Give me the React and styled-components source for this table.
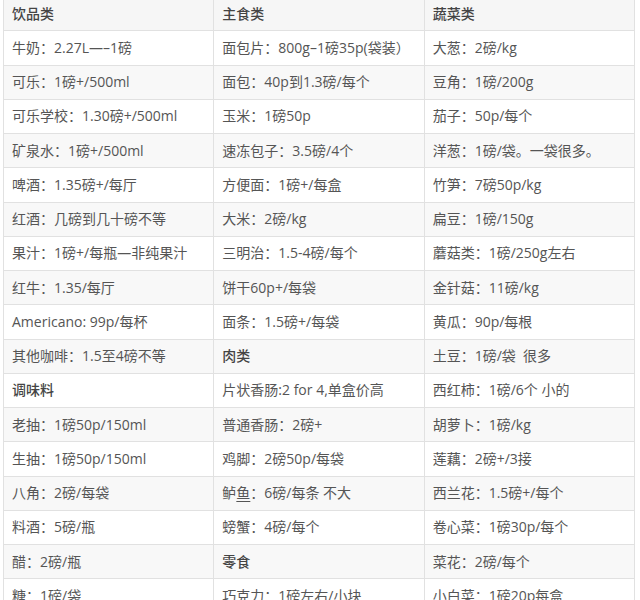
import React from 'react';
import styled, { createGlobalStyle } from 'styled-components';

const GlobalStyle = createGlobalStyle`
  html, body {
    margin: 0;
    padding: 0;
    background: #ffffff;
  }
  body {
    font-family: 'Open Sans', 'Noto Sans CJK SC', sans-serif;
    color: #555;
    overflow: hidden;
  }
`;

const Page = styled.div`
  width: 640px;
  height: 600px;
  overflow: hidden;
  padding-left: 3px;
  box-sizing: border-box;
`;

const PriceTable = styled.table`
  width: 632px;
  margin-top: -4px;
  border-collapse: collapse;
  table-layout: fixed;
  font-size: 14px;
`;

const Row = styled.tr`
  height: 34.25px;
  background: ${(p) => (p.$shade ? '#f8f8f8' : '#ffffff')};
`;

const Cell = styled.td`
  border: 1px solid #e1e1e1;
  padding: 0 8px;
  white-space: pre;
  overflow: hidden;
  line-height: 20px;
  font-weight: ${(p) => (p.$title ? 500 : 400)};
  color: ${(p) => (p.$title ? '#444' : '#555')};
`;

const HeadCell = styled.th`
  border: 1px solid #e1e1e1;
  padding: 0 8px;
  text-align: left;
  font-weight: 500;
  color: #444;
  line-height: 20px;
  background: #f6f6f6;
`;

const Under = styled.span`
  text-decoration: underline;
  text-underline-offset: 3px;
`;

const rows = [
  ['牛奶：2.27L—–1磅', '面包片：800g–1磅35p(袋装）', '大葱：2磅/kg'],
  ['可乐：1磅+/500ml', '面包：40p到1.3磅/每个', '豆角：1磅/200g'],
  ['可乐学校：1.30磅+/500ml', '玉米：1磅50p', '茄子：50p/每个'],
  ['矿泉水：1磅+/500ml', '速冻包子：3.5磅/4个', '洋葱：1磅/袋。一袋很多。'],
  ['啤酒：1.35磅+/每厅', '方便面：1磅+/每盒', '竹笋：7磅50p/kg'],
  ['红酒：几磅到几十磅不等', '大米：2磅/kg', '扁豆：1磅/150g'],
  ['果汁：1磅+/每瓶—非纯果汁', '三明治：1.5-4磅/每个', '蘑菇类：1磅/250g左右'],
  ['红牛：1.35/每厅', '饼干60p+/每袋', '金针菇：11磅/kg'],
  ['Americano: 99p/每杯', '面条：1.5磅+/每袋', '黄瓜：90p/每根'],
  ['其他咖啡：1.5至4磅不等', { title: '肉类' }, '土豆：1磅/袋  很多'],
  [{ title: '调味料' }, '片状香肠:2 for 4,单盒价高', '西红柿：1磅/6个 小的'],
  ['老抽：1磅50p/150ml', '普通香肠：2磅+', '胡萝卜：1磅/kg'],
  ['生抽：1磅50p/150ml', '鸡脚：2磅50p/每袋', '莲藕：2磅+/3接'],
  ['八角：2磅/每袋', 'fish', '西兰花：1.5磅+/每个'],
  ['料酒：5磅/瓶', '螃蟹：4磅/每个 ', '卷心菜：1磅30p/每个'],
  ['醋：2磅/瓶', { title: '零食' }, '菜花：2磅/每个'],
  ['糖：1磅/袋', '巧克力：1磅左右/小块', '小白菜：1磅20p每盒'],
];

const renderCell = (value, key) => {
  if (value === 'fish') {
    return (
      <Cell key={key}>
        鲈<Under>鱼</Under>：6磅/每条 不大
      </Cell>
    );
  }
  if (typeof value === 'object') {
    return (
      <Cell key={key} $title>
        {value.title}
      </Cell>
    );
  }
  return <Cell key={key}>{value}</Cell>;
};

const App = () => {
  return (
    <Page>
      <GlobalStyle />
      <PriceTable>
        <thead>
          <Row>
            <HeadCell>饮品类</HeadCell>
            <HeadCell>主食类</HeadCell>
            <HeadCell>蔬菜类</HeadCell>
          </Row>
        </thead>
        <tbody>
          {rows.map((row, i) => (
            <Row key={i} $shade={i % 2 === 1}>
              {row.map((value, j) => renderCell(value, j))}
            </Row>
          ))}
        </tbody>
      </PriceTable>
    </Page>
  );
};

export default App;
